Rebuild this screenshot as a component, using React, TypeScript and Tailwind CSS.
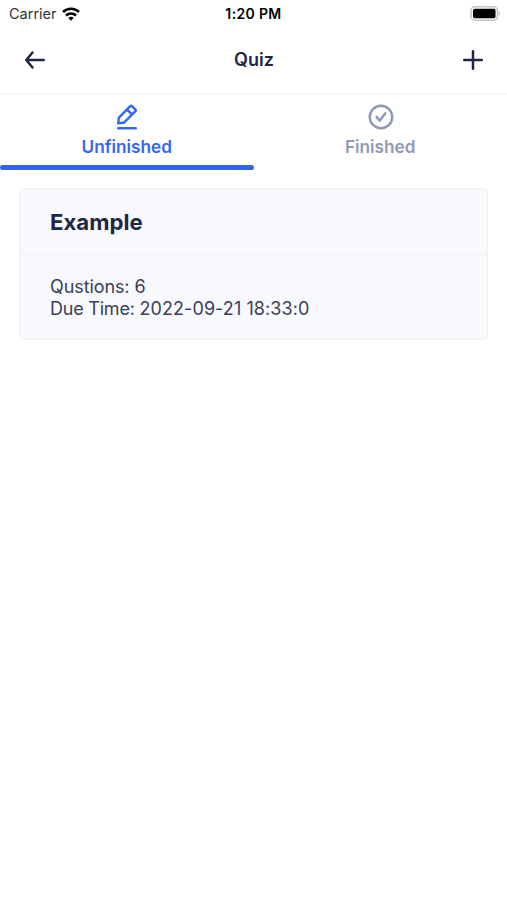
import React from "react";

function Icon({ children, className }: { children: React.ReactNode; className?: string }) {
  return (
    <svg width="30" height="30" viewBox="0 0 24 24" fill="currentColor" className={className}>
      {children}
    </svg>
  );
}

function StatusBar() {
  return (
    <div className="grid h-[27px] grid-cols-[1fr_auto_1fr] items-center pr-[6px] pl-[6px] text-black">
      <div className="flex items-center gap-[5px] pl-[3px]">
        <span className="pt-px text-[14.5px] leading-none text-[#333]">Carrier</span>
        <svg width="18" height="14" viewBox="0 0 18 14" fill="none" stroke="currentColor" strokeWidth="2.6">
          <path d="M1 5a11.5 11.5 0 0 1 16 0" />
          <path d="M4 8.5a7.2 7.2 0 0 1 10 0" />
          <path d="M9 13.8l-2.7-2.9a4 4 0 0 1 5.4 0z" fill="currentColor" stroke="none" />
        </svg>
      </div>
      <span className="text-center text-[14px] leading-none font-semibold tracking-[0.025em]">1:20 PM</span>
      <svg width="31" height="16" viewBox="0 0 31 16" className="justify-self-end">
        <rect x="1" y="0.8" width="26.5" height="13.4" rx="4" fill="white" stroke="#c4c4c4" strokeWidth="1.6" />
        <rect x="3" y="2.8" width="22.5" height="9.4" rx="1.8" fill="black" />
        <path d="M28.8 5.2a2.5 2.5 0 0 1 0 4.2z" fill="#b0b0b0" />
      </svg>
    </div>
  );
}

export default function App() {
  return (
    <div className="min-h-screen bg-white font-['Inter',sans-serif] text-[#222645]">
      <StatusBar />

      {/* Top navigation */}
      <div className="flex h-[68px] items-center justify-between border-b-2 border-[#f7f7f8] pr-[19px] pb-px pl-5">
        <Icon>
          <path d="M19 11H7.14l3.63-4.36a1 1 0 1 0-1.54-1.28l-5 6a1.19 1.19 0 0 0-.09.15c0 .05 0 .08-.07.13A1 1 0 0 0 4 12a1 1 0 0 0 .07.36c0 .05 0 .08.07.13a1.19 1.19 0 0 0 .09.15l5 6A1 1 0 0 0 10 19a1 1 0 0 0 .64-.23 1 1 0 0 0 .13-1.41L7.14 13H19a1 1 0 0 0 0-2z" />
        </Icon>
        <h1 className="text-[18px] font-semibold">Quiz</h1>
        <Icon>
          <path d="M19 11h-6V5a1 1 0 0 0-2 0v6H5a1 1 0 0 0 0 2h6v6a1 1 0 0 0 2 0v-6h6a1 1 0 0 0 0-2z" />
        </Icon>
      </div>

      {/* Tabs */}
      <div className="grid grid-cols-2 pt-[7px] text-[17.2px] leading-[30px] font-semibold">
        <div className="flex h-[63px] flex-col items-center text-[#3366f8]">
          <Icon className="ml-px">
            <path d="M19 20H5a1 1 0 0 0 0 2h14a1 1 0 0 0 0-2z" />
            <path d="M5 18h.09l4.17-.38a2 2 0 0 0 1.21-.57l9-9a1.92 1.92 0 0 0-.07-2.71L16.66 2.6A2 2 0 0 0 14 2.53l-9 9a2 2 0 0 0-.57 1.21L4 16.91A1 1 0 0 0 5 18zM15.27 4L18 6.73l-2 1.95L13.32 6zm-8.9 8.91L12 7.32l2.7 2.7-5.6 5.6-3 .28z" />
          </Icon>
          <span>Unfinished</span>
        </div>
        <div className="flex h-[63px] flex-col items-center text-[#8f9ab3]">
          <Icon className="ml-px">
            <path d="M12 2a10 10 0 1 0 10 10A10 10 0 0 0 12 2zm0 18a8 8 0 1 1 8-8 8 8 0 0 1-8 8z" />
            <path d="M14.7 8.39l-3.78 5-1.63-2.11a1 1 0 0 0-1.58 1.23l2.43 3.11a1 1 0 0 0 .79.38 1 1 0 0 0 .79-.39l4.57-6a1 1 0 1 0-1.6-1.22z" />
          </Icon>
          <span>Finished</span>
        </div>
      </div>
      <div className="h-[5px] w-1/2 rounded-full bg-[#3163f2]" />

      {/* Quiz card */}
      <div className="mx-[19px] mt-[18px] rounded-[5px] border-[1.5px] border-[#edf1f5] bg-[#f7f9fc]">
        <h2 className="flex h-[66px] items-center border-b border-[#edf1f5] px-[30px] text-[22.2px] font-bold">
          Example
        </h2>
        <div className="h-[84px] px-[30px] pt-[21px] text-[18px] leading-[22px] text-[#3a3f56]">
          <p className="tracking-[-0.005em]">Qustions: 6</p>
          <p>
            <span className="tracking-[-0.012em]">Due Time: </span>
            <span className="tracking-[0.004em]">2022-09-21 18:33:0</span>
          </p>
        </div>
      </div>
    </div>
  );
}
